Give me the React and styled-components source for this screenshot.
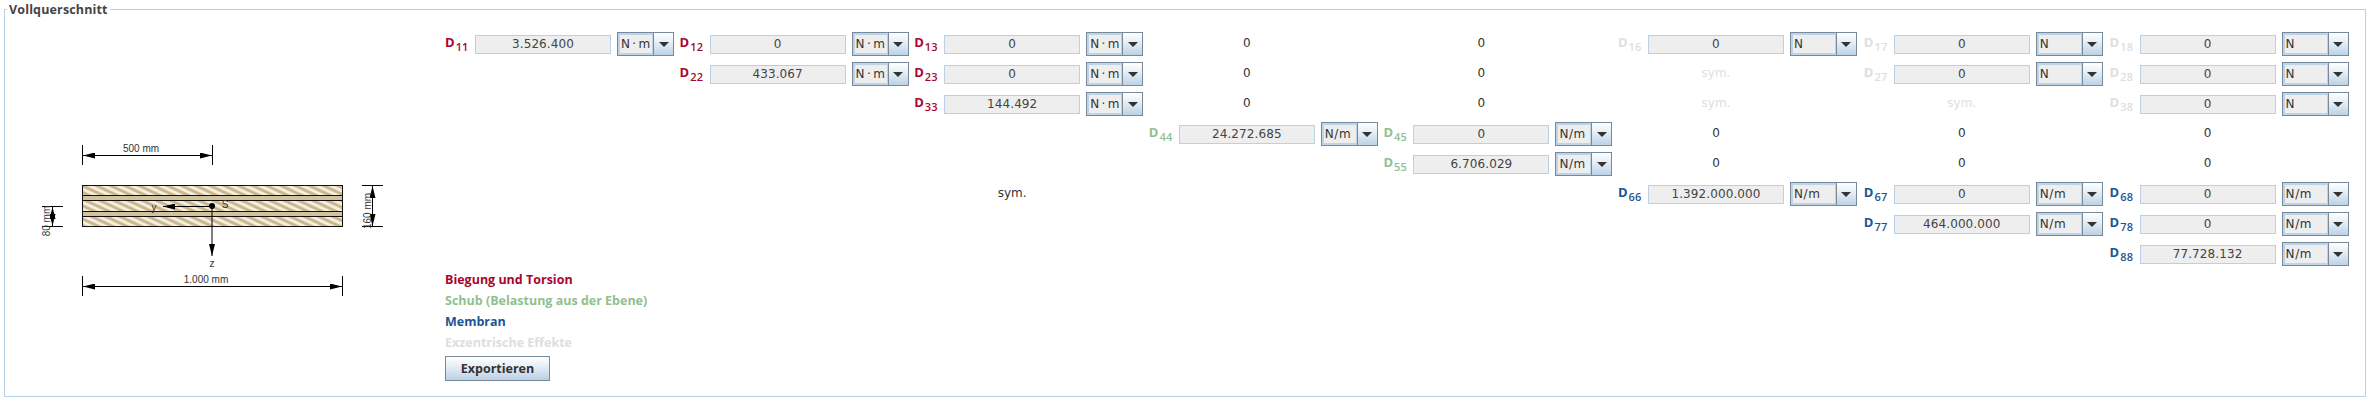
import React from 'react';
import styled, { createGlobalStyle } from 'styled-components';

const Global = createGlobalStyle`
  html, body { margin: 0; padding: 0; background: #fff; }
  body { font-family: "DejaVu Sans", sans-serif; font-size: 12px; color: #333; }
`;

const Panel = styled.fieldset`
  box-sizing: border-box;
  width: 2362px;
  height: 394px;
  margin: 3px 0 0 4px;
  padding: 0;
  border: 1px solid #b9d0e6;
  display: flex;
`;
const Title = styled.legend`
  margin-left: 2px;
  padding: 0 2px;
  font-family: "Open Sans", sans-serif;
  font-size: 12.5px;
  font-weight: 700;
  line-height: 13px;
  color: #444;
  letter-spacing: 0.15px;
`;
const Diagram = styled.svg`
  flex: none;
  width: 440px;
  height: 380px;
  display: block;
  font-family: "Liberation Sans", sans-serif;
`;
const Matrix = styled.div`
  flex: none;
  display: flex;
  flex-direction: column;
  padding-top: 16px;
`;
const Grid = styled.div`
  display: grid;
  grid-template-columns: repeat(5, 234.6px) repeat(3, 245.8px);
  grid-auto-rows: 30px;
`;
const Cell = styled.div`
  display: flex;
  align-items: center;
  height: 24px;
  grid-column: ${p => p.$col};
  grid-row: ${p => p.$row};
`;
const tones = { bend: '#a8062e', shear: '#8fc08f', membrane: '#1d5592', ecc: '#dedede' };
const Label = styled.span`
  flex: none;
  width: 30px;
  height: 24px;
  box-sizing: border-box;
  font-family: "Open Sans", sans-serif;
  font-size: 13px;
  font-weight: 700;
  line-height: 21px;
  white-space: nowrap;
  color: ${p => tones[p.$tone]};
  sub { font-size: 11px; font-weight: 600; vertical-align: -4px; line-height: 0; letter-spacing: .2px; margin-left: 1px; }
`;
const Value = styled.div`
  flex: none;
  box-sizing: border-box;
  width: 136px;
  height: 19px;
  border: 1px solid #b9d0e6;
  background: #eeeeee;
  text-align: center;
  font-size: 12px;
  line-height: 17px;
  letter-spacing: 0.1px;
  color: #444;
`;
const Combo = styled.div`
  flex: none;
  box-sizing: border-box;
  display: flex;
  width: ${p => (p.$wide ? 67 : 57)}px;
  height: 24px;
  margin-left: 6px;
  border: 1px solid #78899c;
`;
const ComboText = styled.div`
  flex: 1;
  box-sizing: border-box;
  border: 2px solid #bcd3e8;
  border-right-width: 1px;
  background: #eeeeee;
  padding-left: 1px;
  font-size: 12px;
  line-height: 18px;
  letter-spacing: ${p => (p.$tight ? 0 : 0.6)}px;
  color: #333;
  white-space: nowrap;
  overflow: hidden;
`;
const ComboButton = styled.div`
  flex: none;
  width: 19px;
  display: flex;
  align-items: center;
  justify-content: center;
  border-left: 1px solid #78899c;
  background: linear-gradient(#ffffff, #e4edf5 45%, #bcd2e6);
  svg { display: block; }
`;
const Plain = styled.div`
  grid-column: ${p => p.$col};
  grid-row: ${p => p.$row};
  height: 24px;
  line-height: 23px;
  padding-left: 30px;
  width: 136px;
  text-align: center;
  font-size: 12px;
  color: ${p => (p.$faint ? '#dedede' : '#333')};
`;
const Legend = styled.div`
  display: flex;
  flex-direction: column;
  align-items: flex-start;
  margin-top: -3px;
`;
const LegendItem = styled.div`
  height: 21px;
  line-height: 21px;
  font-family: "Open Sans", sans-serif;
  font-size: 12.5px;
  font-weight: 700;
  white-space: nowrap;
  color: ${p => tones[p.$tone]};
`;
const ExportButton = styled.button`
  box-sizing: border-box;
  width: 105px;
  height: 25px;
  margin-top: 3px;
  padding: 0;
  border: 1px solid #78899c;
  background: linear-gradient(#ffffff, #e6eef6 40%, #bcd0e4);
  font-family: "Open Sans", sans-serif;
  font-size: 12.5px;
  font-weight: 700;
  color: #333;
`;

const Arrow = () => (
  <svg width="10" height="5" viewBox="0 0 10 5"><path d="M0 0H10L5 5Z" fill="#333" /></svg>
);

const NM = 'N\u2009·\u2009m';
const PM = 'N/m';

const Field = ({ tone, i, val, unit, r, c }) => (
  <Cell $row={r} $col={c}>
    <Label $tone={tone}>D<sub>{i}</sub></Label>
    <Value>{val}</Value>
    <Combo $wide={c > 5}>
      <ComboText $tight={unit === NM}>{unit}</ComboText>
      <ComboButton><Arrow /></ComboButton>
    </Combo>
  </Cell>
);

const fields = [
  ['bend', '11', '3.526.400', NM, 1, 1],
  ['bend', '12', '0', NM, 1, 2],
  ['bend', '13', '0', NM, 1, 3],
  ['ecc', '16', '0', 'N', 1, 6],
  ['ecc', '17', '0', 'N', 1, 7],
  ['ecc', '18', '0', 'N', 1, 8],
  ['bend', '22', '433.067', NM, 2, 2],
  ['bend', '23', '0', NM, 2, 3],
  ['ecc', '27', '0', 'N', 2, 7],
  ['ecc', '28', '0', 'N', 2, 8],
  ['bend', '33', '144.492', NM, 3, 3],
  ['ecc', '38', '0', 'N', 3, 8],
  ['shear', '44', '24.272.685', PM, 4, 4],
  ['shear', '45', '0', PM, 4, 5],
  ['shear', '55', '6.706.029', PM, 5, 5],
  ['membrane', '66', '1.392.000.000', PM, 6, 6],
  ['membrane', '67', '0', PM, 6, 7],
  ['membrane', '68', '0', PM, 6, 8],
  ['membrane', '77', '464.000.000', PM, 7, 7],
  ['membrane', '78', '0', PM, 7, 8],
  ['membrane', '88', '77.728.132', PM, 8, 8],
];
const plains = [
  ['0', 1, 4], ['0', 1, 5], ['0', 2, 4], ['0', 2, 5], ['0', 3, 4], ['0', 3, 5],
  ['sym.', 2, 6, true], ['sym.', 3, 6, true], ['sym.', 3, 7, true],
  ['0', 4, 6], ['0', 4, 7], ['0', 4, 8], ['0', 5, 6], ['0', 5, 7], ['0', 5, 8],
  ['sym.', 6, 3],
];

const Section = () => (
  <Diagram viewBox="5 16 440 380" aria-label="Querschnitt">
    <defs>
      <pattern id="wood" width="6" height="6" patternUnits="userSpaceOnUse" patternTransform="rotate(25)">
        <rect width="6" height="6" fill="#f4eedf" />
        <rect width="6" height="3" fill="#cbb88f" />
      </pattern>
      <marker id="head" markerWidth="12" markerHeight="6" refX="12" refY="3" orient="auto-start-reverse" markerUnits="userSpaceOnUse">
        <path d="M0 0L12 3L0 6Z" fill="#000" />
      </marker>
    </defs>
    <rect x="82.5" y="185.5" width="260" height="41" fill="url(#wood)" />
    <rect x="82.5" y="195.5" width="260" height="5" fill="#d3c29e" stroke="#111" />
    <rect x="82.5" y="211.5" width="260" height="5" fill="#d3c29e" stroke="#111" />
    <rect x="82.5" y="185.5" width="260" height="41" fill="none" stroke="#111" />
    <g stroke="#000" strokeWidth="1" fill="none">
      <path d="M82.5 145V165M212.5 145V165M82.5 276V296M342.5 276V296M362 185.5H383M362 226.5H383M42 206.5H63M42 226.5H63" />
      <path d="M83 155.5H212" markerStart="url(#head)" markerEnd="url(#head)" />
      <path d="M83 286.5H342" markerStart="url(#head)" markerEnd="url(#head)" />
      <path d="M372.5 186V226" markerStart="url(#head)" markerEnd="url(#head)" />
      <path d="M52.5 207V226" markerStart="url(#head)" markerEnd="url(#head)" />
      <path d="M212 206.5H163" markerEnd="url(#head)" />
      <path d="M212 206.5V256" markerEnd="url(#head)" />
    </g>
    <circle cx="212" cy="206" r="3" fill="#000" />
    <g fontSize="10" fill="#333">
      <text x="141" y="152" textAnchor="middle">500 mm</text>
      <text x="206" y="283" textAnchor="middle">1.000 mm</text>
      <text x="154" y="211" textAnchor="middle">y</text>
      <text x="225" y="208" textAnchor="middle">S</text>
      <text x="212" y="267" textAnchor="middle">z</text>
      <text transform="translate(370.5 211) rotate(-90)" textAnchor="middle">160 mm</text>
      <text transform="translate(49.5 221) rotate(-90)" textAnchor="middle">80 mm</text>
    </g>
  </Diagram>
);

export default function App() {
  return (
    <>
      <Global />
      <Panel>
        <Title>Vollquerschnitt</Title>
        <Section />
        <Matrix>
          <Grid>
            {fields.map(f => (
              <Field key={f[1]} tone={f[0]} i={f[1]} val={f[2]} unit={f[3]} r={f[4]} c={f[5]} />
            ))}
            {plains.map((p, k) => (
              <Plain key={k} $row={p[1]} $col={p[2]} $faint={p[3]}>{p[0]}</Plain>
            ))}
          </Grid>
          <Legend>
            <LegendItem $tone="bend">Biegung und Torsion</LegendItem>
            <LegendItem $tone="shear">Schub (Belastung aus der Ebene)</LegendItem>
            <LegendItem $tone="membrane">Membran</LegendItem>
            <LegendItem $tone="ecc">Exzentrische Effekte</LegendItem>
            <ExportButton>Exportieren</ExportButton>
          </Legend>
        </Matrix>
      </Panel>
    </>
  );
}
